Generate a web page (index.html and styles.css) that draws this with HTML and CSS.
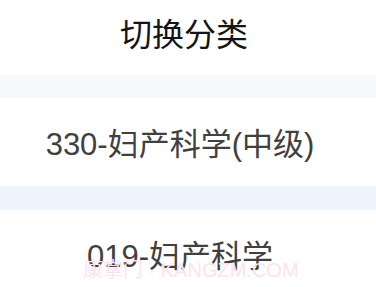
FILE: index.html
```html
<!DOCTYPE html>
<html lang="zh-CN">
<head>
<meta charset="utf-8">
<title>切换分类</title>
<link rel="stylesheet" href="styles.css">
</head>
<body>
<div class="page">
  <header class="header">切换分类</header>
  <div class="band band-a"></div>
  <div class="item">330-妇产科学(中级)</div>
  <div class="band band-b"></div>
  <div class="item">019-妇产科学</div>
  <div class="watermark">康掌门 · KANGZM.COM</div>
</div>
</body>
</html>
```
FILE: styles.css
```css
html, body {
  margin: 0;
  padding: 0;
  background: #ffffff;
}
.page {
  position: relative;
  width: 376px;
  height: 287px;
  overflow: hidden;
  display: flex;
  flex-direction: column;
  font-family: "Liberation Sans", "Noto Sans CJK SC", sans-serif;
}
.header {
  height: 75px;
  flex: none;
  display: flex;
  align-items: center;
  justify-content: center;
  font-size: 32px;
  color: #141414;
  padding: 0 8px 12px 0;
  box-sizing: border-box;
}
.band {
  height: 23px;
  flex: none;
}
.band-a { background: #f6f8fc; }
.band-b { background: #eef5fc; height: 24px; }
.item {
  height: 88px;
  flex: none;
  display: flex;
  align-items: center;
  justify-content: center;
  font-size: 31px;
  color: #404040;
  box-sizing: border-box;
  padding: 0 16px 2px 0;
}
.watermark {
  position: absolute;
  left: 83px;
  top: 254px;
  font-size: 20px;
  color: #fbe3ee;
  white-space: nowrap;
}
```
